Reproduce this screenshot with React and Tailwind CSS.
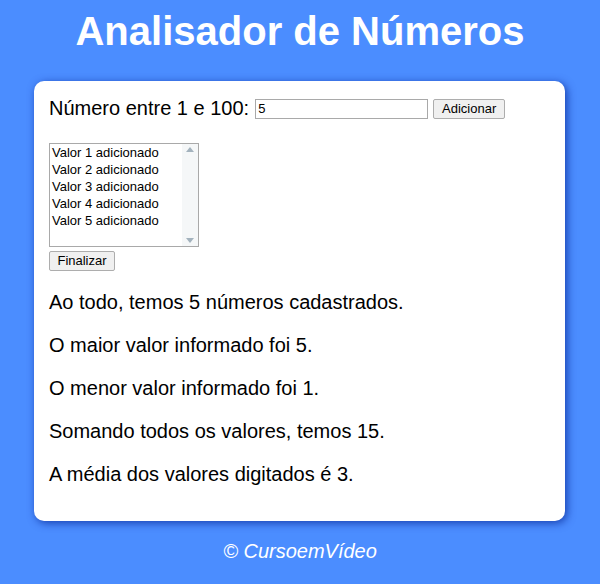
export default function App() {
  const items = [1, 2, 3, 4, 5];
  return (
    <div className="min-h-[584px] w-full bg-[#4b8dff] pt-[8px] font-['Liberation_Sans',Arial,sans-serif] overflow-hidden">
      <h1 className="text-center text-[40px] leading-[46px] font-bold text-white">Analisador de Números</h1>
      <div className="ml-[34px] mr-[35px] mt-[27px] rounded-[10px] bg-white px-[15px] pt-[16px] pb-[15px] shadow-[2px_2px_8px_rgba(0,30,140,0.7)] text-black">
        <div className="flex items-center h-[23px]">
          <span className="text-[20px] leading-[23px]">Número entre 1 e 100:</span>
          <div className="ml-[6px] h-[20px] w-[173px] border border-[#a9a9a9] bg-white px-[2px] text-[13px] leading-[18px]">5</div>
          <div className="ml-[5px] h-[20px] w-[72px] border border-[#adadad] rounded-[2px] bg-[#f0f0f0] text-center text-[13px] leading-[18px]">Adicionar</div>
        </div>
        <div className="mt-[23px] flex h-[104px] w-[150px] border border-[#a9a9a9] bg-white">
          <div className="flex-1 pl-[2px] text-[13px] leading-[17px]">
            {items.map((i) => (
              <div key={i}>Valor {i} adicionado</div>
            ))}
          </div>
          <div className="flex w-[16px] flex-col items-center justify-between bg-[#f5f7f8] py-[3px]">
            <svg width="8" height="5" viewBox="0 0 8 5"><path d="M4 0 L8 5 L0 5 Z" fill="#a3b2bd" /></svg>
            <svg width="8" height="5" viewBox="0 0 8 5"><path d="M0 0 L8 0 L4 5 Z" fill="#a3b2bd" /></svg>
          </div>
        </div>
        <div className="mt-[4px] h-[20px] w-[66px] border border-[#adadad] rounded-[2px] bg-[#f0f0f0] text-center text-[13px] leading-[18px]">Finalizar</div>
        <div className="text-[20px] leading-[23px]">
          <p className="mt-[20px]">Ao todo, temos 5 números cadastrados.</p>
          <p className="mt-[20px]">O maior valor informado foi 5.</p>
          <p className="mt-[20px]">O menor valor informado foi 1.</p>
          <p className="mt-[20px]">Somando todos os valores, temos 15.</p>
          <p className="mt-[20px] mb-[20px]">A média dos valores digitados é 3.</p>
        </div>
      </div>
      <p className="mt-[19px] text-center text-[20px] leading-[23px] italic text-white">© CursoemVídeo</p>
    </div>
  );
}
